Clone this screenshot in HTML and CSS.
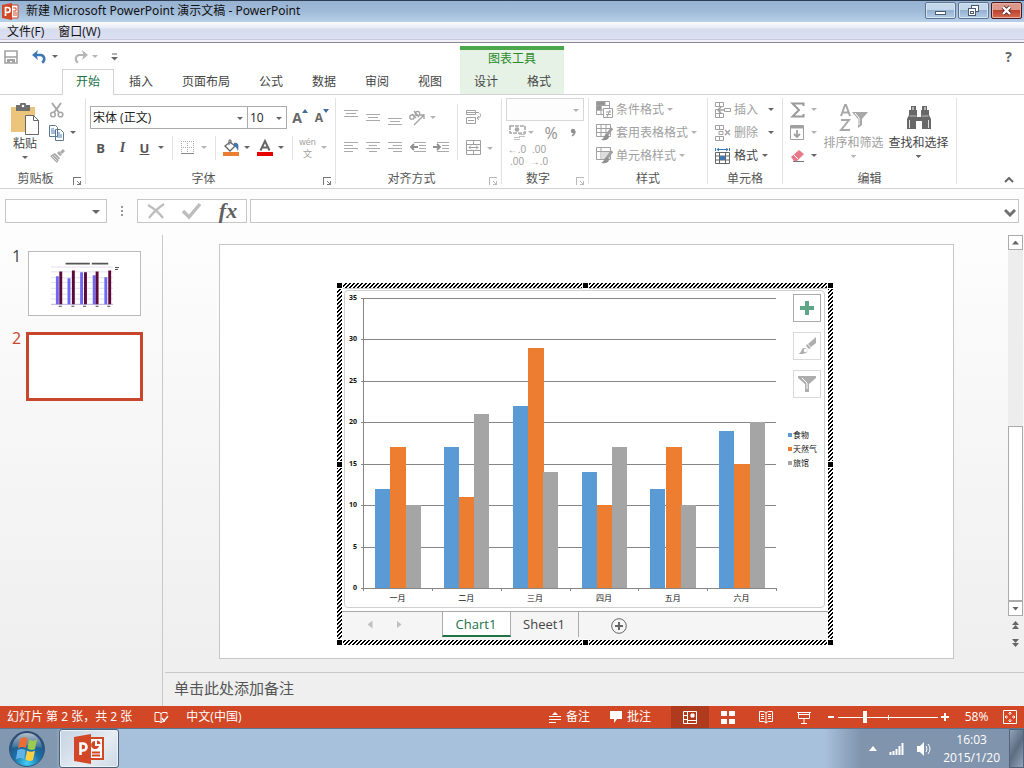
FILE: index.html
```
<!DOCTYPE html>
<html lang="zh-CN">
<head>
    <meta charset="UTF-8">
    <meta name="viewport" content="width=device-width, initial-scale=1.0">
    <title>新建 Microsoft PowerPoint 演示文稿 - PowerPoint</title>
    <link rel="stylesheet" href="styles.css">
</head>
<body>
    <header class="titlebar">
        <svg class="app-icon" width="17" height="17" viewBox="0 0 17 17">
            <path d="M9 2h7v13H9z" fill="#fff" stroke="#d24726"/>
            <path d="M11 5h3v3h-3M11 10h4M11 12h4" fill="none" stroke="#d24726"/>
            <path d="M0 2l10-2v17L0 15z" fill="#d24726"/>
            <path d="M3.500 13V4.500h2.200a2.300 2.300 0 0 1 0 4.800H3.500" fill="none" stroke="#fff" stroke-width="1.700"/>
        </svg>
        <span class="title">新建 Microsoft PowerPoint 演示文稿 - PowerPoint</span>
        <button class="win-btn" aria-label="最小化">
            <svg width="13" height="13" viewBox="0 0 13 13"><rect x="1.500" y="7.500" width="10" height="3" fill="#fff" stroke="#4a5b70"/></svg>
        </button>
        <button class="win-btn" aria-label="还原">
            <svg width="13" height="13" viewBox="0 0 13 13" fill="#fff" stroke="#4a5b70"><rect x="4.500" y="1.500" width="7" height="6"/><rect x="1.500" y="4.500" width="7" height="7"/><rect x="3.500" y="7.500" width="3" height="2"/></svg>
        </button>
        <button class="win-btn close" aria-label="关闭">
            <svg width="13" height="13" viewBox="0 0 13 13"><path d="M3 3l7 7M10 3l-7 7" stroke="#5a2a2a" stroke-width="4"/><path d="M3 3l7 7M10 3l-7 7" stroke="#fff" stroke-width="2.400"/></svg>
        </button>
    </header>

    <nav class="menubar">
        <a href="#">文件(F)</a>
        <a href="#">窗口(W)</a>
    </nav>

    <div class="ribbon-head">
        <div class="head-main">
            <div class="quick">
                <button aria-label="保存"><svg width="14" height="14" viewBox="0 0 14 14"><path d="M1 1h12v12H1z" fill="none" stroke="#a3a3a3" stroke-width="1.600"/><path d="M1 7h12" stroke="#a3a3a3" stroke-width="1.600"/><path d="M3 9h8v4H8v-2H6v2H3z" fill="#a3a3a3"/></svg></button>
                <button class="undo" aria-label="撤销"><svg width="16" height="14" viewBox="0 0 16 14"><path d="M2 5h7a4 4 0 0 1 1 7.500" fill="none" stroke="#3b78b5" stroke-width="2.600"/><path d="M0 5l6-5-1.500 5L6 10z" fill="#3b78b5"/></svg></button>
                <i class="arrow"></i>
                <button class="redo" aria-label="恢复"><svg width="16" height="14" viewBox="0 0 16 14"><path d="M14 5H7a4 4 0 0 0-1 7.500" fill="none" stroke="#b5b5b5" stroke-width="2.200"/><path d="M16 5l-6-5 1.500 5L10 10z" fill="#b5b5b5"/></svg></button>
                <i class="arrow dim"></i>
                <button class="more" aria-label="自定义快速访问工具栏"><svg width="7" height="8" viewBox="0 0 7 8"><path d="M1 1h5" stroke="#666"/><path d="M0 4h7L3.500 7.500z" fill="#666"/></svg></button>
            </div>
            <div class="tabs">
                <a class="tab active" href="#">开始</a>
                <a class="tab" href="#">插入</a>
                <a class="tab" href="#">页面布局</a>
                <a class="tab" href="#">公式</a>
                <a class="tab" href="#">数据</a>
                <a class="tab" href="#">审阅</a>
                <a class="tab" href="#">视图</a>
            </div>
        </div>
        <div class="context">
            <div class="context-name">图表工具</div>
            <div class="tabs">
                <a class="tab" href="#">设计</a>
                <a class="tab" href="#">格式</a>
            </div>
        </div>
        <button class="help" aria-label="帮助">?</button>
    </div>

    <div class="ribbon">
        <section class="group clipboard">
            <div class="group-body">
                <button class="big">
                    <svg width="30" height="32" viewBox="0 0 30 32"><path d="M1 4h24v25H1z" fill="#ecc57c"/><path d="M6 2h4a3 3 0 0 1 6 0h4v6H6z" fill="#6e6e6e"/><circle cx="13" cy="3" r="1.300" fill="#fff"/><path d="M15.500 12.500h8l5 5v14h-13z" fill="#fff" stroke="#666"/><path d="M23.500 12.500v5h5" fill="none" stroke="#666"/></svg>
                    <span>粘贴</span>
                    <i class="arrow"></i>
                </button>
                <div class="col">
                    <button class="tool" aria-label="剪切"><svg width="16" height="16" viewBox="0 0 16 16" fill="none" stroke="#a9a9a9" stroke-width="1.600"><path d="M3 1l7 9.500M12 1L5 10.500" stroke-width="2"/><circle cx="4" cy="12.500" r="2.300"/><circle cx="11.500" cy="12.500" r="2.300"/></svg></button>
                    <div class="line"><button class="tool" aria-label="复制"><svg width="16" height="16" viewBox="0 0 16 16" fill="#fff" stroke="#607890"><path d="M.5.5h6l2 2v9h-8zM6.500 4.500h5l3 3v8h-8z"/><path d="M2 4h3M2 6h4M2 8h4M8 8h3M8 10h5M8 12h5" stroke="#4c80b5"/></svg></button><i class="arrow"></i></div>
                    <button class="tool" aria-label="格式刷"><svg width="16" height="16" viewBox="0 0 16 16"><path d="M1 8l5-3 5 5-3 5zM8 5l3 3 2-1-3-4zM11 4l3-3 2 2-3 3z" fill="#aaa"/><path d="M3 8l5 5M5 7l5 5" stroke="#ddd"/></svg></button>
                </div>
            </div>
            <div class="group-foot"><span>剪贴板</span><button class="launcher" aria-label="剪贴板选项"></button></div>
        </section>

        <section class="group font">
            <div class="group-body">
                <div class="line fonts">
                    <div class="combo wide"><select aria-label="字体"><option>宋体 (正文)</option></select><i class="arrow"></i></div>
                    <div class="combo narrow"><select aria-label="字号"><option>10</option></select><i class="arrow"></i></div>
                    <button class="tool grow" aria-label="增大字号"><b>A</b><svg width="6" height="4" viewBox="0 0 6 4"><path d="M0 4l3-4 3 4z" fill="#3f6f9f"/></svg></button>
                    <button class="tool shrink" aria-label="减小字号"><b>A</b><svg width="6" height="4" viewBox="0 0 6 4"><path d="M0 0l3 4 3-4z" fill="#3f6f9f"/></svg></button>
                </div>
                <div class="line format">
                    <button class="tool"><b>B</b></button>
                    <button class="tool"><b class="italic">I</b></button>
                    <button class="tool"><b class="under">U</b></button>
                    <i class="arrow"></i>
                    <span class="bar"></span>
                    <button class="tool" aria-label="边框"><svg width="14" height="14" viewBox="0 0 14 14" stroke="#aaa" fill="none"><path d="M.5 0v13M6.500 0v13M12.500 0v13M0 .5h13M0 6.500h13" stroke-dasharray="1 1"/><path d="M0 12.500h13" stroke="#888"/></svg></button>
                    <i class="arrow dim"></i>
                    <span class="bar"></span>
                    <button class="tool" aria-label="填充颜色"><svg width="18" height="17" viewBox="0 0 18 17"><path d="M3 7l5-4 5 4-5 5z" fill="#fff" stroke="#666" stroke-width="1.300"/><path d="M7 6V1h2v4" fill="none" stroke="#666"/><path d="M12 4c5-1 5 3 4 8-1-2-2-5-4-4z" fill="#4378ad"/><path d="M1 13h16v4H1z" fill="#ed7d31"/></svg></button>
                    <i class="arrow"></i>
                    <button class="tool" aria-label="字体颜色"><svg width="16" height="17" viewBox="0 0 16 17"><path d="M3.500 11.500L8 2l4.500 9.500M5 8.500h6" fill="none" stroke="#666" stroke-width="2"/><path d="M0 13h16v4H0z" fill="#e80000"/></svg></button>
                    <i class="arrow"></i>
                    <span class="bar"></span>
                    <button class="tool pinyin"><span>wén</span><span>文</span></button>
                    <i class="arrow dim"></i>
                </div>
            </div>
            <div class="group-foot"><span>字体</span><button class="launcher" aria-label="字体选项"></button></div>
        </section>

        <section class="group align">
            <div class="group-body">
                <div class="col align-main">
                    <div class="line">
                        <button class="tool" aria-label="顶端对齐"><svg width="14" height="16" viewBox="0 0 14 16"><path d="M0 .5h14M2 3.500h10M0 6.500h14" stroke="#aaa"/></svg></button>
                        <button class="tool" aria-label="垂直居中"><svg width="14" height="16" viewBox="0 0 14 16"><path d="M0 4.500h14M2 7.500h10M0 10.500h14" stroke="#aaa"/></svg></button>
                        <button class="tool" aria-label="底端对齐"><svg width="14" height="16" viewBox="0 0 14 16"><path d="M0 8.500h14M2 11.500h10M0 14.500h14" stroke="#aaa"/></svg></button>
                        <button class="tool" aria-label="方向"><svg width="18" height="17" viewBox="0 0 18 17" fill="none" stroke="#a0a0a0" stroke-width="1.300"><circle cx="4" cy="8" r="2.200"/><path d="M4 5l4 4M6 2l5 6M6 16L16 6M12 6h4v4"/><circle cx="9.500" cy="4.500" r="2.200"/></svg></button>
                        <i class="arrow dim"></i>
                    </div>
                    <div class="line">
                        <button class="tool" aria-label="左对齐"><svg width="14" height="14" viewBox="0 0 14 14"><path d="M0 .5h14M0 3.500h9M0 6.500h14M0 9.500h9" stroke="#aaa"/></svg></button>
                        <button class="tool" aria-label="居中"><svg width="14" height="14" viewBox="0 0 14 14"><path d="M0 .5h14M3 3.500h8M0 6.500h14M3 9.500h8" stroke="#aaa"/></svg></button>
                        <button class="tool" aria-label="右对齐"><svg width="14" height="14" viewBox="0 0 14 14"><path d="M0 .5h14M5 3.500h9M0 6.500h14M5 9.500h9" stroke="#aaa"/></svg></button>
                        <button class="tool indent" aria-label="减少缩进"><svg width="16" height="14" viewBox="0 0 16 14"><path d="M4 .5h12M9 3.500h7M9 6.500h7M4 9.500h12" stroke="#aaa"/><path d="M8 5H2M4 2L1 5l3 3" fill="none" stroke="#909090" stroke-width="1.800"/></svg></button>
                        <button class="tool indent" aria-label="增加缩进"><svg width="16" height="14" viewBox="0 0 16 14"><path d="M4 .5h12M9 3.500h7M9 6.500h7M4 9.500h12" stroke="#aaa"/><path d="M0 5h6M4 2l3 3-3 3" fill="none" stroke="#909090" stroke-width="1.800"/></svg></button>
                    </div>
                </div>
                <span class="bar tall"></span>
                <div class="col align-side">
                    <button class="tool" aria-label="自动换行"><svg width="17" height="18" viewBox="0 0 17 18" fill="none" stroke="#a0a0a0"><path d="M1.500 1.500h9v4h-9zM1.500 8.500h9v6h-9zM1 3.500h13M3 11.500h6M14.500 4c2 2 1 5-2 5M14 7l-2 2 2 2"/></svg></button>
                    <div class="line"><button class="tool" aria-label="合并后居中"><svg width="15" height="17" viewBox="0 0 15 17" fill="none" stroke="#a0a0a0"><path d="M.5.5h14v14H.5zM.5 4.500h14M.5 10.500h14M7.500 0v4M7.500 11v4M3 7.500h9M5 5.500l-2 2 2 2M10 5.500l2 2-2 2"/></svg></button><i class="arrow dim"></i></div>
                </div>
            </div>
            <div class="group-foot"><span>对齐方式</span><button class="launcher dim" aria-label="对齐选项"></button></div>
        </section>

        <section class="group number">
            <div class="group-body">
                <div class="combo dim"><select aria-label="数字格式" disabled><option></option></select><i class="arrow dim"></i></div>
                <div class="line">
                    <button class="tool" aria-label="会计数字格式"><svg width="17" height="16" viewBox="0 0 17 16"><path d="M1 1h15v7H1z" fill="none" stroke="#a8a8a8" stroke-width="1.600" stroke-dasharray="4 1"/><circle cx="8" cy="4.500" r="2.300" fill="#a8a8a8"/><path d="M10 9.500h6M10 11.500h6M5 12.500h6M5 14.500h6" stroke="#c0c0c0"/></svg></button>
                    <i class="arrow dim"></i>
                    <button class="tool percent">%</button>
                    <button class="tool comma" aria-label="千位分隔样式"><svg width="6" height="9" viewBox="0 0 6 9"><circle cx="3" cy="3" r="2.200" fill="#909090"/><path d="M5 3q0 3-3 5" fill="none" stroke="#909090" stroke-width="1.500"/></svg></button>
                </div>
                <div class="line">
                    <button class="tool decimals"><span>←.0</span><span>.00</span></button>
                    <button class="tool decimals"><span>.00</span><span>→.0</span></button>
                </div>
            </div>
            <div class="group-foot"><span>数字</span><button class="launcher dim" aria-label="数字选项"></button></div>
        </section>

        <section class="group styles">
            <div class="group-body">
                <button class="row dim"><svg width="17" height="17" viewBox="0 0 17 17" fill="#fff" stroke="#a0a0a0"><path d="M.5.5h13v13H.5zM.5 4.500h13M.5 9h13M5 .5v13"/><path d="M1 1h8v3H1zM1 5h4v4H1z" fill="#909090"/><path d="M7.500 7.500h9v9h-9zM10 11h5M10 13.500h5M14 9l-3 7"/></svg>条件格式<i class="arrow dim"></i></button>
                <button class="row dim"><svg width="17" height="17" viewBox="0 0 17 17" fill="none" stroke="#a0a0a0"><path d="M.5.5h14v12H.5zM.5 4.500h14M.5 8.500h14M5 .5v12M10 .5v12"/><path d="M16 4l-5 7" stroke-width="3"/><path d="M11 10c-3 0-2 4-6 6 4 1 8 0 8-4z" fill="#909090" stroke="none"/></svg>套用表格格式<i class="arrow dim"></i></button>
                <button class="row dim"><svg width="17" height="17" viewBox="0 0 17 17" fill="none" stroke="#a0a0a0"><path d="M.5.5h14v12H.5zM.5 4.500h14M5 .5v12"/><path d="M5 5h9v7H5z" fill="#ddd" stroke="none"/><path d="M16 4l-5 7" stroke-width="3"/><path d="M11 10c-3 0-2 4-6 6 4 1 8 0 8-4z" fill="#909090" stroke="none"/></svg>单元格样式<i class="arrow dim"></i></button>
            </div>
            <div class="group-foot"><span>样式</span></div>
        </section>

        <section class="group cells">
            <div class="group-body">
                <button class="row dim"><svg width="16" height="16" viewBox="0 0 16 16" fill="none" stroke="#a0a0a0"><path d="M.5.5h8v4h-8zM4.500.5v4M.5 11.500h8v4h-8zM4.500 11.500v4M.5 11.500v-4h4v4M9.500 6.500h6v3h-6z"/><path d="M9 8H4M6 5L3 8l3 3" stroke-width="1.600"/></svg>插入<i class="arrow"></i></button>
                <button class="row dim"><svg width="16" height="16" viewBox="0 0 16 16" fill="none" stroke="#a0a0a0"><path d="M.5.5h8v4h-8zM4.500.5v4M.5 11.500h8v4h-8zM4.500 11.500v4M4 6.500h4v3H4z"/><path d="M10 5l5 5M15 5l-5 5" stroke-width="1.400"/></svg>删除<i class="arrow"></i></button>
                <button class="row"><svg width="16" height="16" viewBox="0 0 16 16" fill="none" stroke="#666"><path d="M.5 4.500h14v11H.5zM.5 8h14M.5 12h14M4.500 4.500v11M10.500 4.500v11"/><path d="M5 8h5v4H5z" fill="#3b78b5" stroke="none"/><path d="M.5 0v3M14.500 0v3M2 1.500h11M4 0L2 1.500 4 3M11 0l2 1.500L11 3" stroke="#3b78b5"/></svg>格式<i class="arrow"></i></button>
            </div>
            <div class="group-foot"><span>单元格</span></div>
        </section>

        <section class="group edit">
            <div class="group-body">
                <div class="col">
                    <div class="line"><button class="tool" aria-label="自动求和"><svg width="15" height="16" viewBox="0 0 15 16"><path d="M13.500 4V1.500H2.500L9 8l-6.500 6.500h11V12" fill="none" stroke="#9a9a9a" stroke-width="2"/></svg></button><i class="arrow dim"></i></div>
                    <div class="line"><button class="tool" aria-label="填充"><svg width="14" height="15" viewBox="0 0 14 15" fill="none" stroke="#a0a0a0"><path d="M.5.5h13v14H.5z"/><path d="M1 2h12" stroke-width="3"/><path d="M7 5v7M4 9l3 3 3-3" stroke-width="1.800"/></svg></button><i class="arrow dim"></i></div>
                    <div class="line"><button class="tool" aria-label="清除"><svg width="15" height="14" viewBox="0 0 15 14"><path d="M1 8l8-7 5 4-7 7H4z" fill="#e8798a"/><path d="M4 6l4 4" stroke="#fff"/><path d="M3 12.500h11" stroke="#777"/></svg></button><i class="arrow"></i></div>
                </div>
                <button class="big dim">
                    <svg width="30" height="30" viewBox="0 0 30 30" fill="none" stroke="#a8a8a8" stroke-width="2"><path d="M2 13L6 2h1l4 11M3.500 9.500h6M2 17h8L2 27h9"/><path d="M13 9h16l-6 7v6l-4 3v-9z" fill="#a8a8a8" stroke="none"/><path d="M16 10l4 5v7" stroke="#fff" stroke-width="1"/></svg>
                    <span>排序和筛选</span>
                    <i class="arrow dim"></i>
                </button>
                <button class="big">
                    <svg width="28" height="30" viewBox="0 0 28 30"><path d="M6 3h5v4h1v7h4V7h1V3h5v4h2v5l2 4v10h-9v-8h-6v8H2V16l2-4V7h2z" fill="#686868"/><path d="M4.500 13h7M16.500 13h7" stroke="#bbb"/><path d="M4.500 17v8M23.500 17v8" stroke="#ddd"/><path d="M8 4v3M20 4v3" stroke="#fff"/></svg>
                    <span>查找和选择</span>
                    <i class="arrow"></i>
                </button>
            </div>
            <div class="group-foot"><span>编辑</span></div>
        </section>
        <button class="collapse" aria-label="折叠功能区"><svg width="10" height="6" viewBox="0 0 10 6"><path d="M1 5l4-4 4 4" fill="none" stroke="#666" stroke-width="2"/></svg></button>
    </div>

    <div class="formula">
        <div class="combo name-box"><select aria-label="名称框"><option></option></select><i class="arrow"></i></div>
        <span class="dots"></span>
        <div class="fx-box">
            <button aria-label="取消"><svg width="18" height="18" viewBox="0 0 18 18"><path d="M1 3q10 6 15 13M17 2Q8 8 2 16" fill="none" stroke="#bdbdbd" stroke-width="2.200"/></svg></button>
            <button aria-label="输入"><svg width="19" height="18" viewBox="0 0 19 18"><path d="M1 9l6 6L18 2" fill="none" stroke="#bdbdbd" stroke-width="3.400"/></svg></button>
            <button class="fx">fx</button>
        </div>
        <div class="combo fx-input"><input type="text" aria-label="编辑栏"><svg width="12" height="9" viewBox="0 0 12 9"><path d="M1 2l5 5 5-5" fill="none" stroke="#707070" stroke-width="3"/></svg></div>
    </div>

    <main class="workspace">
        <aside class="slides">
            <a class="thumb-item" href="#">
                <span>1</span>
                <svg class="thumb" width="113" height="65" viewBox="0 0 113 65">
                    <path d="M22 15.500h64M22 20.500h64M22 26.500h64M22 31.500h64M22 37.500h64M22 43.500h64M22 48.500h64" stroke="#e4e0ec"/>
                    <path d="M22 54h64" stroke="#b8b0d8"/>
                    <path d="M37 12h25M64 12h17" stroke="#555" stroke-width="2"/>
                    <path d="M28.500 54V25M40.500 54V27M53.500 54V21M66.500 54V24M78.500 54V26" stroke="#7068f0" stroke-width="3"/>
                    <path d="M32 54V20M45 54V19M57.500 54V21M69.500 54V20M82.500 54V19" stroke="#5c0838" stroke-width="3"/>
                    <path d="M30 56h3M43 56h3M55 56h3M68 56h3M80 56h3M88 16h4M88 18h3" stroke="#444"/>
                </svg>
            </a>
            <a class="thumb-item current" href="#">
                <span>2</span>
                <div class="thumb"></div>
            </a>
        </aside>

        <div class="editor">
            <div class="stage">
                <div class="slide">
                    <div class="embed">
                        <div class="chart-area">
                            <svg id="chart" viewBox="0 0 486 322"></svg>
                            <div class="chart-tools">
                                <button class="on" aria-label="图表元素"><svg width="14" height="14" viewBox="0 0 14 14"><path d="M5 0h4v5h5v4H9v5H5V9H0V5h5z" fill="#5fa588"/></svg></button>
                                <button aria-label="图表样式"><svg width="18" height="18" viewBox="0 0 18 18" fill="#adadad"><path d="M18 0v6l-5 4-3-3z"/><path d="M9 7l4 4-2 1-3-3z"/><path d="M0 17c4-1 3-6 6-6s5 3 2 5c-2 1-5 1-8 1z"/><circle cx="7.500" cy="13.500" r="1.800" fill="#fff"/></svg></button>
                                <button aria-label="图表筛选器"><svg width="18" height="16" viewBox="0 0 18 16"><path d="M0 0h18v2l-7 6v8H7V8L0 2z" fill="#adadad"/><path d="M4 2l5 5v6" fill="none" stroke="#fff"/></svg></button>
                            </div>
                        </div>
                        <div class="sheets">
                            <button class="sheet-nav prev" aria-label="上一张"></button>
                            <button class="sheet-nav next" aria-label="下一张"></button>
                            <a class="sheet active" href="#">Chart1</a>
                            <a class="sheet" href="#">Sheet1</a>
                            <button class="sheet-add" aria-label="新工作表"><svg width="16" height="16" viewBox="0 0 16 16" fill="none" stroke="#666"><circle cx="8" cy="8" r="7.300"/><path d="M4 8h8M8 4v8" stroke-width="2"/></svg></button>
                        </div>
                        <i class="handle nw"></i><i class="handle n"></i><i class="handle ne"></i>
                        <i class="handle w"></i><i class="handle e"></i>
                        <i class="handle sw"></i><i class="handle s"></i><i class="handle se"></i>
                    </div>
                </div>
                <div class="scroll">
                    <button aria-label="向上滚动"><i class="up"></i></button>
                    <div class="track"><div class="scroll-thumb"></div></div>
                    <button aria-label="向下滚动"><i class="down"></i></button>
                    <button class="jump" aria-label="上一张幻灯片"><i class="up"></i><i class="up"></i></button>
                    <button class="jump" aria-label="下一张幻灯片"><i class="down"></i><i class="down"></i></button>
                </div>
            </div>
            <div class="notes">单击此处添加备注</div>
        </div>
    </main>

    <footer class="status">
        <span class="slide-no">幻灯片 第 2 张，共 2 张</span>
        <button class="spell" aria-label="拼写检查"><svg width="15" height="13" viewBox="0 0 15 13" fill="none" stroke="#fff"><path d="M1 1.500h4l2 1v9l-2-1H1zM7 2.500l2-1h4v2M7 11.500l2-1h2"/><path d="M8 7l2 3 4-5" stroke-width="1.400"/></svg></button>
        <span class="lang">中文(中国)</span>
        <button class="status-btn"><svg width="12" height="12" viewBox="0 0 12 12"><path d="M0 5.500h12M0 8.500h12M0 11.500h7" stroke="#fff"/><path d="M3 4l3-3 3 3z" fill="#fff"/></svg>备注</button>
        <button class="status-btn"><svg width="12" height="12" viewBox="0 0 12 12"><path d="M0 0h12v8H7l-3 4V8H0z" fill="#fff"/></svg>批注</button>
        <div class="views">
            <button class="on" aria-label="普通视图"><svg width="14" height="13" viewBox="0 0 14 13" fill="none" stroke="#fff"><path d="M.5.5h13v12H.5zM4.500.5v12M4.500 9.500h9"/><path d="M8 3h3v3H8z" fill="#fff"/><path d="M1 4.500h3M1 8.500h3"/></svg></button>
            <button aria-label="幻灯片浏览"><svg width="14" height="13" viewBox="0 0 14 13" fill="#fff"><path d="M0 0h6v5H0zM8 0h6v5H8zM0 8h6v5H0zM8 8h6v5H8z"/></svg></button>
            <button aria-label="阅读视图"><svg width="14" height="13" viewBox="0 0 14 13" fill="none" stroke="#fff"><path d="M.5.5h4l2.500 1 2.500-1h4v10h-4l-2.500 1-2.500-1h-4zM7 1.500v11M2 3.500h3M2 5.500h3M2 7.500h3M9 3.500h3M9 5.500h3M9 7.500h3"/></svg></button>
            <button aria-label="幻灯片放映"><svg width="14" height="13" viewBox="0 0 14 13" fill="none" stroke="#fff"><path d="M0 1.500h14M1.500 2v5.500h11V2M7 8v4M4 12.500h6M1 3.500h12"/></svg></button>
        </div>
        <button class="zoom-btn" aria-label="缩小"><svg width="8" height="8" viewBox="0 0 8 8"><path d="M1 4h6" stroke="#fff" stroke-width="2"/></svg></button>
        <input class="zoom" type="range" min="0" max="100" value="27" aria-label="显示比例">
        <button class="zoom-btn" aria-label="放大"><svg width="8" height="8" viewBox="0 0 8 8"><path d="M0 4h8M4 0v8" stroke="#fff" stroke-width="2"/></svg></button>
        <span class="percent-label">58%</span>
        <button class="fit" aria-label="适应窗口"><svg width="14" height="14" viewBox="0 0 14 14" fill="none" stroke="#fff"><path d="M.5.5h13v13H.5z"/><path d="M7 2v3M7 9v3M2 7h3M9 7h3M5.500 3.500L7 2l1.500 1.500M5.500 10.500L7 12l1.500-1.500M3.500 5.500L2 7l1.500 1.500M10.500 5.500L12 7l-1.500 1.500"/></svg></button>
    </footer>

    <footer class="taskbar">
        <button class="start" aria-label="开始">
            <svg width="38" height="38" viewBox="0 0 38 38">
                <defs>
                    <radialGradient id="orb" cx="50%" cy="90%" r="85%">
                        <stop offset="0" stop-color="#3fd0f4"/>
                        <stop offset=".45" stop-color="#1c70a8"/>
                        <stop offset="1" stop-color="#24466c"/>
                    </radialGradient>
                    <linearGradient id="shine" x1="0" y1="0" x2="0" y2="1">
                        <stop offset="0" stop-color="#fff" stop-opacity=".65"/>
                        <stop offset="1" stop-color="#fff" stop-opacity=".1"/>
                    </linearGradient>
                </defs>
                <circle cx="19" cy="19" r="17.500" fill="url(#orb)" stroke="#33557a"/>
                <path d="M4 18a15 15 0 0 1 30 0q-15-5-30 0z" fill="url(#shine)"/>
                <path d="M12 9q4-3 7.500-.5L18 18q-4-2-8 .5z" fill="#ec6c35"/>
                <path d="M21 9.500q4 2.500 8 0L27 19q-4 2-7.500-.5z" fill="#9acb4e"/>
                <path d="M9.500 20q4-2 8 0L16 29q-4-2-8 .5z" fill="#63b2e8"/>
                <path d="M19 20.500q4 2.500 8 0L25 30q-4 2-7.500-.5z" fill="#fbd043"/>
            </svg>
        </button>
        <button class="task" aria-label="PowerPoint">
            <svg width="32" height="30" viewBox="0 0 32 30"><path d="M14 4h16v21H14z" fill="#fff" stroke="#d24726" stroke-width="2"/><path d="M19 18.500h8M19 21.500h8" stroke="#d24726" stroke-width="2"/><path d="M22 7a4 4 0 1 0 4 5h-4zM24 6.500a4 4 0 0 1 3.500 3.500H24z" fill="#d24726"/><path d="M1 3l17-3v30L1 27z" fill="#d24726"/><path d="M7.500 21V9.500H10a3 3 0 0 1 0 7H7.500" fill="none" stroke="#fff" stroke-width="2.600"/></svg>
        </button>
        <div class="tray">
            <svg width="8" height="5" viewBox="0 0 8 5"><path d="M0 5l4-5 4 5z" fill="#fff"/></svg>
            <svg width="16" height="12" viewBox="0 0 16 12"><path d="M1.500 12V9M4.500 12V8M7.500 12V6M10.500 12V3M13.500 12V0" stroke="#fff" stroke-width="2"/></svg>
            <svg width="14" height="14" viewBox="0 0 14 14"><path d="M0 4h3l4-4v14l-4-4H0z" fill="#fff"/><path d="M9 4q2 3 0 6M11 2q4 5 0 10" fill="none" stroke="#fff"/></svg>
            <div class="clock"><span>16:03</span><span>2015/1/20</span></div>
        </div>
        <button class="desktop" aria-label="显示桌面"></button>
    </footer>

    <script>
        const months = ["一月", "二月", "三月", "四月", "五月", "六月"];
        const series = [
            { name: "食物", color: "#5b9bd5", values: [12, 17, 22, 14, 12, 19] },
            { name: "天然气", color: "#ed7d31", values: [17, 11, 29, 10, 17, 15] },
            { name: "旅馆", color: "#a5a5a5", values: [10, 21, 14, 17, 10, 20] }
        ];
        const left = 21, right = 434, top0 = 9, bottom = 299, max = 35;
        const yOf = v => Math.round(bottom - v * (bottom - top0) / max);
        const step = (right - left) / months.length;
        let out = "";

        // grid lines and value axis
        for (let v = 0; v <= max; v += 5) {
            out += `<path class="grid" d="M${left - 2} ${yOf(v) + 0.5}H${right}"/>`;
            out += `<text class="value" x="${left - 6}" y="${yOf(v) + 2}">${v}</text>`;
        }
        out += `<path class="grid" d="M${left + 0.5} ${top0}V${bottom + 3}"/>`;

        // bars
        months.forEach((month, i) => {
            const start = left + i * step;
            series.forEach((s, n) => {
                const x = Math.round(start + 12 + n * 15.3);
                const y = yOf(s.values[i]);
                out += `<rect x="${x}" y="${y}" width="${n === 1 ? 16 : 15}" height="${bottom - y}" fill="${s.color}"/>`;
            });
            out += `<path class="grid" d="M${Math.round(start + step) + 0.5} ${bottom}v3"/>`;
            out += `<text class="month" x="${start + step / 2}" y="312">${month}</text>`;
        });

        // legend
        series.forEach((s, n) => {
            out += `<rect x="446" y="${144 + n * 14}" width="4" height="4" fill="${s.color}"/>`;
            out += `<text class="legend" x="451" y="${149 + n * 14}">${s.name}</text>`;
        });
        document.getElementById("chart").innerHTML = out;
    </script>
</body>
</html>
```
FILE: styles.css
```
* {
    box-sizing: border-box;
}

body {
    margin: 0;
    height: 100vh;
    min-height: 700px;
    display: flex;
    flex-direction: column;
    overflow: hidden;
    font-family: "Open Sans", "Noto Sans CJK SC", sans-serif;
    font-size: 12px;
    line-height: 16px;
    color: #444;
    background: #fff;
}

button {
    display: flex;
    align-items: center;
    justify-content: center;
    padding: 0;
    border: none;
    background: none;
    font: inherit;
    color: inherit;
}

a {
    color: inherit;
    text-decoration: none;
}

svg {
    display: block;
    flex: none;
}

.arrow {
    flex: none;
    width: 6px;
    height: 3px;
    background: #666;
    clip-path: polygon(0 0, 100% 0, 50% 100%);
}

.arrow.dim {
    background: #b5b5b5;
}

/* window title */
.titlebar {
    display: flex;
    align-items: center;
    gap: 2px;
    height: 22px;
    padding: 0 2px;
    border-top: 1px solid #2c3e52;
    background: linear-gradient(#98b3d3, #a0bbd8 50%, #b7d0ea);
    color: #111;
}

.title {
    flex: 1;
    padding: 0 0 2px 5px;
    font-family: "Noto Sans", "Noto Sans CJK SC", sans-serif;
}

.win-btn {
    width: 31px;
    height: 17px;
    margin-bottom: 2px;
    border: 1px solid #5d7590;
    border-radius: 2px;
    background: linear-gradient(#c3d6ea 45%, #94b1d0 50%, #b5cde6);
    box-shadow: inset 0 0 0 1px #d4e3f2;
}

.win-btn.close {
    border-color: #4a1a1c;
    background: linear-gradient(#dc988a 45%, #bd4330 50%, #d46a50);
    box-shadow: inset 0 0 0 1px #e8b0a5;
}

.menubar {
    display: flex;
    gap: 14px;
    height: 21px;
    padding: 2px 7px 0;
    border-bottom: 1px solid #8a8695;
    background: linear-gradient(#fbfcfe, #e6ebf5 30%, #d6dcee 35%, #dcdff2 85%, #b0b0bc 90%, #f2f2f6 92%);
    color: #111;
}

/* quick access and tabs */
.ribbon-head {
    display: flex;
    height: 52px;
    padding-top: 3px;
    border-bottom: 1px solid #d2d2d2;
}

.head-main {
    width: 460px;
    display: flex;
    flex-direction: column;
}

.quick {
    display: flex;
    align-items: center;
    height: 23px;
    padding: 0 0 2px 4px;
}

.quick .undo {
    margin: 0 4px 0 14px;
}

.quick .redo {
    margin: 0 4px 0 14px;
}

.quick .more {
    margin-left: 13px;
}

.tabs {
    display: flex;
    gap: 1px;
}

.head-main .tabs {
    padding-left: 62px;
}

.tab {
    height: 25px;
    padding: 5px 14px 0;
    white-space: nowrap;
}

.tab.active {
    height: 26px;
    margin-bottom: -1px;
    padding: 4px 13px 0;
    border: 1px solid #d2d2d2;
    border-bottom: none;
    background: #fff;
    color: #217346;
}

.context {
    width: 104px;
    border-top: 4px solid #4ca64c;
    background: #e5f2e5;
}

.context-name {
    height: 19px;
    line-height: 18px;
    text-align: center;
    color: #2b8a2b;
}

.help {
    margin: 2px 12px 0 auto;
    height: 18px;
    font-size: 14px;
    font-weight: bold;
    color: #666;
}

/* ribbon */
.ribbon {
    display: flex;
    flex: none;
    height: 94px;
    border-bottom: 1px solid #d2d2d2;
}

.group {
    flex: none;
    display: flex;
    flex-direction: column;
    margin: 3px 0 4px;
    border-right: 1px solid #e2e2e2;
}

.group-body {
    flex: 1;
    display: flex;
}

.group-foot {
    display: flex;
    align-items: center;
    height: 10px;
    color: #555;
}

.group-foot span {
    flex: 1;
    text-align: center;
}

.launcher {
    width: 8px;
    height: 8px;
    margin: 3px 4px 0 2px;
    border: solid #777;
    border-width: 1px 0 0 1px;
    background: linear-gradient(#777, #777) right bottom / 4px 1px no-repeat,
        linear-gradient(#777, #777) right bottom / 1px 4px no-repeat,
        linear-gradient(45deg, transparent 45%, #777 45%, #777 60%, transparent 60%) right bottom / 4px 4px no-repeat;
}

.launcher.dim {
    opacity: 0.5;
}

.col {
    display: flex;
    flex-direction: column;
}

.line {
    display: flex;
    align-items: center;
    height: 23px;
}

.tool {
    flex: none;
    width: 22px;
    height: 23px;
}

.bar {
    flex: none;
    width: 1px;
    height: 24px;
    background: #e2e2e2;
}

.bar.tall {
    height: 56px;
    margin-top: 6px;
}

.big {
    flex-direction: column;
    justify-content: flex-start;
    padding-top: 5px;
}

.big span {
    margin: 1px 0 4px;
    white-space: nowrap;
}

.big.dim,
.row.dim {
    color: #a0a0a0;
}

.row {
    justify-content: flex-start;
    height: 23px;
    gap: 3px;
    white-space: nowrap;
}

.combo {
    position: relative;
    height: 23px;
    border: 1px solid #ababab;
    background: #fff;
}

.combo select,
.combo input {
    display: block;
    width: 100%;
    height: 100%;
    padding: 0 2px;
    border: none;
    outline: none;
    appearance: none;
    background: none;
    font: inherit;
    color: #222;
}

.combo .arrow {
    position: absolute;
    right: 4px;
    top: 10px;
}

.combo.dim {
    border-color: #d8d8d8;
    background: #fdfdfd;
}

.clipboard {
    width: 86px;
}

.clipboard .big {
    width: 46px;
    padding-left: 4px;
}

.clipboard .col .arrow {
    margin-left: 2px;
}

.font {
    width: 250px;
}

.font .group-body,
.number .group-body,
.styles .group-body,
.cells .group-body {
    flex-direction: column;
}

.font .group-body {
    padding: 8px 0 0 4px;
    gap: 7px;
}

.combo.wide {
    width: 158px;
}

.combo.narrow {
    width: 40px;
    margin-left: -1px;
}

.grow,
.shrink {
    align-items: flex-start;
    font-size: 14px;
    color: #666;
}

.grow b,
.shrink b {
    padding-top: 4px;
}

.grow {
    margin-left: 2px;
}

.shrink {
    font-size: 12px;
}

.grow svg,
.shrink svg {
    margin-top: 3px;
}

.format b {
    font-size: 13px;
    color: #555;
}

.format .italic {
    font-family: "Liberation Serif", serif;
    font-style: italic;
    font-size: 14px;
}

.format .under {
    text-decoration: underline;
}

.format .tool {
    margin-left: -1px;
    width: 23px;
}

.format .arrow {
    margin: 0 4px 0 2px;
}

.format .bar {
    margin: 0 4px;
}

.pinyin,
.decimals {
    flex-direction: column;
    font-family: "Liberation Sans", "Noto Sans CJK SC", sans-serif;
    font-size: 10px;
    line-height: 12px;
    color: #a0a0a0;
}

.pinyin {
    font-size: 9px;
}

.align {
    width: 166px;
}

.align .group-body {
    padding-left: 4px;
}

.align-main {
    width: 117px;
    padding-top: 8px;
    gap: 8px;
}

.align-main .arrow {
    margin-left: 2px;
}

.indent {
    width: 23px;
}

.align-side {
    padding: 8px 0 0 4px;
    gap: 8px;
}

.align-side .arrow {
    margin-left: 3px;
}

.number {
    width: 87px;
}

.number .group-body {
    padding: 0 4px;
}

.percent {
    margin-left: 6px;
    font-size: 16px;
    color: #909090;
}

.styles {
    width: 119px;
}

.styles .group-body,
.cells .group-body {
    padding-left: 7px;
}

.cells {
    width: 75px;
}

.cells .arrow {
    margin-left: 7px;
}

.cells .row:last-child .arrow {
    margin-left: 1px;
}

.edit {
    width: 174px;
}

.edit .group-body {
    padding-left: 3px;
}

.edit .col {
    width: 35px;
}

.edit .col .arrow {
    margin-left: 3px;
}

.edit .big {
    width: 65px;
}

.edit .big span {
    margin-top: 2px;
}

.collapse {
    align-self: flex-end;
    margin: 0 10px 5px auto;
}

/* formula bar */
.formula {
    flex: none;
    display: flex;
    height: 46px;
    padding: 10px 5px 0;
    background: #fdfdfd;
}

.formula .combo,
.fx-box {
    height: 24px;
    border: 1px solid #c6c6c6;
    background: #fff;
}

.name-box {
    width: 102px;
}

.name-box .arrow {
    right: 6px;
    width: 8px;
    height: 4px;
}

.dots {
    width: 2px;
    height: 10px;
    margin: 7px 14px 0;
    background: repeating-linear-gradient(#999 0 2px, transparent 2px 4px);
}

.fx-box {
    display: flex;
    align-items: center;
    justify-content: space-around;
    width: 110px;
    margin-right: 3px;
}

.fx {
    font: italic bold 22px/22px "Liberation Serif", serif;
    color: #606060;
}

.fx-input {
    flex: 1;
}

.fx-input svg {
    position: absolute;
    right: 2px;
    top: 8px;
}

/* slides and editing area */
.workspace {
    flex: 1;
    min-height: 0;
    display: flex;
    background: linear-gradient(#fdfdfd, #efefef 90%);
}

.slides {
    width: 163px;
    padding-top: 16px;
    border-right: 1px solid #c8c8c8;
}

.thumb-item {
    display: flex;
    padding-left: 12px;
    margin-bottom: 16px;
    font-size: 16px;
    line-height: 10px;
}

.thumb-item span {
    width: 16px;
}

.thumb {
    width: 113px;
    height: 65px;
    border: 1px solid #bbb;
    background: #fff;
}

.current {
    color: #c8472c;
}

.current span {
    width: 14px;
    line-height: 12px;
}

.current .thumb {
    width: 117px;
    height: 69px;
    border: 3px solid #c8472c;
}

.editor {
    flex: 1;
    display: flex;
    flex-direction: column;
    margin-left: 2px;
}

.stage {
    flex: 1;
    min-height: 0;
    display: flex;
}

.slide {
    flex: 1;
    display: flex;
    justify-content: center;
    align-items: center;
    margin: 9px 54px 13px 54px;
    padding: 24px 4px 0 0;
    border: 1px solid #c6c6c6;
    background: #fff;
}

.embed {
    position: relative;
    width: 496px;
    padding: 5px;
    background: linear-gradient(135deg, #000 25%, #fff 25%, #fff 50%, #000 50%, #000 75%, #fff 75%) 0 0 / 4px 4px;
}

.handle {
    position: absolute;
    width: 5px;
    height: 5px;
    background: #000;
    outline: 1px solid #fff;
}

.nw, .n, .ne { top: 0; }
.sw, .s, .se { bottom: 0; }
.nw, .w, .sw { left: 0; }
.ne, .e, .se { right: 0; }
.n, .s { left: calc(50% - 2px); }
.w, .e { top: calc(50% - 2px); }

.chart-area {
    position: relative;
    background: #fff;
    border-top: 1px solid #c8c8c8;
}

.chart-area::before {
    content: "";
    position: absolute;
    inset: 1px 3px 3px 2px;
    border: 1px solid #d0d0d0;
    border-radius: 4px;
}

#chart {
    position: relative;
    width: 100%;
    font-size: 8px;
    fill: #111;
}

#chart .grid {
    fill: none;
    stroke: #868686;
}

#chart .value {
    font-size: 7px;
    font-weight: bold;
    text-anchor: end;
}

#chart .month {
    text-anchor: middle;
}

.chart-tools {
    position: absolute;
    top: 5px;
    right: 7px;
    display: flex;
    flex-direction: column;
    gap: 10px;
}

.chart-tools button {
    width: 28px;
    height: 28px;
    border: 1px solid #dadada;
    background: #fff;
}

.chart-tools .on {
    border-color: #ababab;
}

.sheets {
    display: flex;
    height: 29px;
    padding-left: 26px;
    border-top: 1px solid #a8a8a8;
    background: #f5f5f5;
    font-size: 13px;
}

.sheet-nav {
    width: 5px;
    height: 8px;
    margin: 9px 24px 0 0;
    background: #c0c0c0;
}

.prev {
    clip-path: polygon(100% 0, 100% 100%, 0 50%);
}

.next {
    margin-right: 40px;
    clip-path: polygon(0 0, 100% 50%, 0 100%);
}

.sheet {
    width: 68px;
    height: 25px;
    line-height: 24px;
    text-align: center;
    border-right: 1px solid #ababab;
}

.sheet.active {
    width: 69px;
    border-left: 1px solid #ababab;
    border-bottom: 2px solid #217346;
    background: #fff;
    color: #217346;
}

.sheet-add {
    height: 28px;
    margin-left: 32px;
}

.scroll {
    width: 15px;
    margin-right: 1px;
    display: flex;
    flex-direction: column;
    align-items: stretch;
    padding-bottom: 20px;
}

.scroll button {
    flex: none;
    height: 15px;
    border: 1px solid #ababab;
    background: #fff;
}

.up,
.down {
    width: 7px;
    height: 4px;
    background: #666;
    clip-path: polygon(50% 0, 100% 100%, 0 100%);
}

.down {
    clip-path: polygon(0 0, 100% 0, 50% 100%);
}

.track {
    flex: 1;
    display: flex;
    flex-direction: column;
    justify-content: flex-end;
    background: #ededed;
}

.scroll-thumb {
    height: 50%;
    border: 1px solid #ababab;
    background: #fff;
}

.scroll .jump {
    flex-direction: column;
    height: 18px;
    border: none;
    background: none;
}

.notes {
    height: 34px;
    padding: 7px 9px;
    border-top: 1px solid #c8c8c8;
    font-size: 15px;
    color: #555;
}

/* status bar */
.status {
    flex: none;
    display: flex;
    align-items: center;
    height: 22px;
    padding: 0 7px;
    background: #d24726;
    color: #fff;
    white-space: nowrap;
}

.slide-no {
    font-family: "Noto Sans", "Noto Sans CJK SC", sans-serif;
}

.spell {
    margin: 0 17px 0 22px;
}

.lang {
    flex: 1;
}

.status-btn {
    gap: 5px;
    margin-right: 20px;
}

.views {
    display: flex;
}

.views button {
    width: 38px;
    height: 22px;
}

.views .on {
    background: #b03a1e;
}

.zoom-btn {
    width: 10px;
    height: 22px;
}

.views + .zoom-btn {
    margin-left: 3px;
}

.zoom {
    width: 104px;
    height: 16px;
    margin: 0;
    appearance: none;
    background: linear-gradient(#fff, #fff) center / 1px 5px no-repeat,
        linear-gradient(#fff, #fff) center / 100px 1px no-repeat;
}

.zoom::-webkit-slider-thumb {
    appearance: none;
    width: 4px;
    height: 12px;
    background: #fff;
}

.percent-label {
    width: 53px;
    text-align: center;
}

/* taskbar */
.taskbar {
    flex: none;
    display: flex;
    height: 40px;
    border-top: 1px solid #5d7590;
    background: linear-gradient(90deg, #8297b0 56px, #a7c0dc 64px);
}

.start {
    width: 54px;
    margin-right: 5px;
}

.task {
    width: 60px;
    border: 1px solid #4c5f75;
    border-radius: 3px;
    background: linear-gradient(135deg, #c4d2e2, #e6ecf2 60%, #ccd8e6);
    box-shadow: inset 0 0 0 1px #eef3f8;
}

.tray {
    display: flex;
    align-items: center;
    gap: 12px;
    margin-left: auto;
    padding: 0 9px 0 44px;
    background: linear-gradient(90deg, #a7c0dc, #8094ad 36px);
    color: #fff;
}

.clock {
    display: flex;
    flex-direction: column;
    align-items: center;
    line-height: 18px;
}

.desktop {
    width: 15px;
    border: 1px solid #536478;
    background: linear-gradient(120deg, #8fa2b8, #5c6d82 50%, #93a5ba);
}
```
